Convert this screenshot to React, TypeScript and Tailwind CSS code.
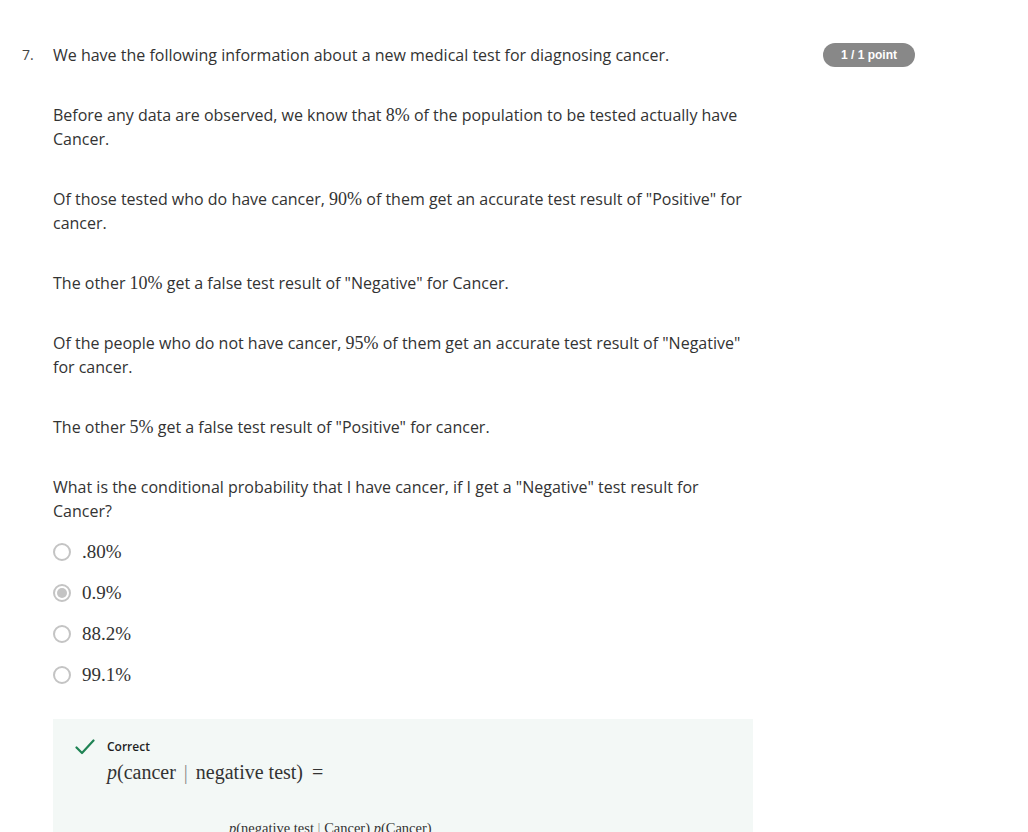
const serif = "[font-family:'Liberation_Serif','Times_New_Roman',serif]";

const M = ({ children }: { children: React.ReactNode }) => (
  <span className="[font-family:'Liberation_Serif','Times_New_Roman',serif] text-[18px]">{children}</span>
);

const options = [".80%", "0.9%", "88.2%", "99.1%"];

function Radio({ checked }: { checked: boolean }) {
  return (
    <span className="flex h-[18px] w-[18px] items-center justify-center rounded-full border-2 border-[#c4c4c4] bg-white">
      {checked && <span className="h-[10px] w-[10px] rounded-full bg-[#c4c4c4]" />}
    </span>
  );
}

export default function App() {
  return (
    <main className="min-h-screen bg-white [font-family:'Open_Sans','Noto_Sans',sans-serif] text-[#333333]">
      <div className="flex pl-[22px] pt-[43px]">
        <div className="w-[31px] text-[14px] leading-[24px] text-[#444]">7.</div>

        <div className="w-[700px] text-[16px] leading-[24px]">
          <p className="mb-[36px]">We have the following information about a new medical test for diagnosing cancer.</p>
          <p className="mb-[36px]">
            Before any data are observed, we know that <M>8%</M> of the population to be tested actually have Cancer.
          </p>
          <p className="mb-[36px]">
            Of those tested who do have cancer, <M>90%</M> of them get an accurate test result of "Positive" for cancer.
          </p>
          <p className="mb-[36px]">
            The other <M>10%</M> get a false test result of "Negative" for Cancer.
          </p>
          <p className="mb-[36px]">
            Of the people who do not have cancer, <M>95%</M> of them get an accurate test result of "Negative" for cancer.
          </p>
          <p className="mb-[36px]">
            The other <M>5%</M> get a false test result of "Positive" for cancer.
          </p>
          <p>What is the conditional probability that I have cancer, if I get a "Negative" test result for Cancer?</p>

          <div className="mt-2 flex flex-col">
            {options.map((o, i) => (
              <label key={o} className="flex h-[41px] items-center gap-[11px]">
                <Radio checked={i === 1} />
                <span className={`${serif} text-[19px] text-[#333]`}>{o}</span>
              </label>
            ))}
          </div>

          <section className="mt-[24px] h-[200px] bg-[#f3f8f6] pl-[22px] pt-[20px]">
            <div className="flex items-start gap-[12px]">
              <svg width="20" height="16" viewBox="0 0 20 16" fill="none">
                <path d="M1.5 8.5 L7 14 L18.5 1.5" stroke="#1f8354" strokeWidth="2.2" strokeLinecap="round" strokeLinejoin="round" />
              </svg>
              <div>
                <div className="text-[12px] font-semibold leading-[16px] text-[#1f1f1f]">Correct</div>
                <div className={`${serif} mt-[4px] text-[20px] leading-[26px] text-[#333]`}>
                  <i>p</i>(cancer <span className="mx-[3px] text-[#888]">|</span> negative test) <span className="ml-1">=</span>
                </div>
                <div className={`${serif} ml-[122px] mt-[34px] text-[14.5px] leading-[18px] text-[#333]`}>
                  <i>p</i>(negative test <span className="text-[#888]">|</span> Cancer) <i>p</i>(Cancer)
                </div>
              </div>
            </div>
          </section>
        </div>

        <div className="ml-[70px]">
          <span className="flex h-[24px] w-[92px] items-center justify-center rounded-full bg-[#888888] [font-family:'Liberation_Sans',Arial,sans-serif] text-[12px] font-bold text-white">
            1 / 1 point
          </span>
        </div>
      </div>
    </main>
  );
}
